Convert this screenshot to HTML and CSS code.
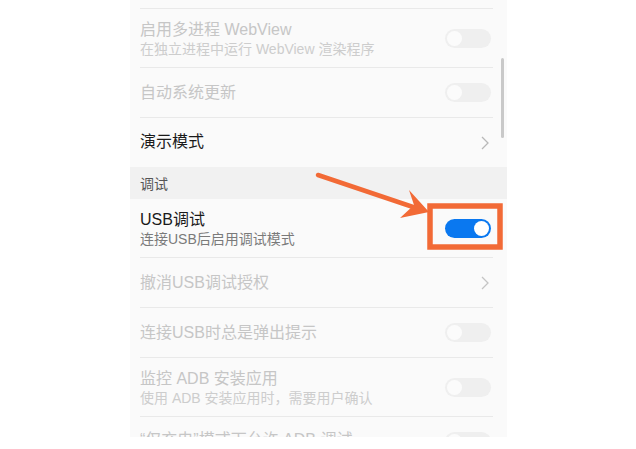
FILE: index.html
```html
<!DOCTYPE html>
<html lang="zh-CN">
<head>
<meta charset="utf-8">
<title>开发者选项</title>
<link rel="stylesheet" href="styles.css">
</head>
<body>
<div class="page">
  <div class="panel">
    <div class="list">
      <div class="row row-cut"></div>
      <div class="row row-tall disabled">
        <div class="texts">
          <div class="title">启用多进程 WebView</div>
          <div class="sub">在独立进程中运行 WebView 渲染程序</div>
        </div>
        <span class="toggle off"></span>
      </div>
      <div class="row disabled">
        <div class="texts"><div class="title">自动系统更新</div></div>
        <span class="toggle off"></span>
      </div>
      <div class="row row-last">
        <div class="texts"><div class="title">演示模式</div></div>
        <svg class="chevron" viewBox="0 0 8 14" width="8" height="14"><path d="M1 1 L7 7 L1 13" fill="none" stroke="#b8b8b8" stroke-width="1.3"/></svg>
      </div>
    </div>
    <div class="section">调试</div>
    <div class="list">
      <div class="row row-tall">
        <div class="texts">
          <div class="title">USB调试</div>
          <div class="sub">连接USB后启用调试模式</div>
        </div>
        <span class="toggle on"></span>
      </div>
      <div class="row disabled">
        <div class="texts"><div class="title">撤消USB调试授权</div></div>
        <svg class="chevron" viewBox="0 0 8 14" width="8" height="14"><path d="M1 1 L7 7 L1 13" fill="none" stroke="#c4c4c4" stroke-width="1.3"/></svg>
      </div>
      <div class="row disabled">
        <div class="texts"><div class="title">连接USB时总是弹出提示</div></div>
        <span class="toggle off"></span>
      </div>
      <div class="row row-tall disabled">
        <div class="texts">
          <div class="title">监控 ADB 安装应用</div>
          <div class="sub">使用 ADB 安装应用时，需要用户确认</div>
        </div>
        <span class="toggle off"></span>
      </div>
      <div class="row disabled row-partial">
        <div class="texts"><div class="title">“仅充电”模式下允许 ADB 调试</div></div>
        <span class="toggle off"></span>
      </div>
    </div>
    <div class="scrollbar"></div>
  </div>
  <svg class="annot" width="636" height="449" viewBox="0 0 636 449">
    <line x1="318" y1="175" x2="416" y2="208" stroke="#f26a36" stroke-width="4.5" stroke-linecap="round"/>
    <path d="M429 212 L409 190 L414 205 L400 218 Z" fill="#f26a36"/>
    <rect x="430" y="206" width="70" height="41" fill="none" stroke="#f26a36" stroke-width="5.5"/>
  </svg>
</div>
</body>
</html>
```
FILE: styles.css
```css
html, body {
  margin: 0;
  padding: 0;
  background: #ffffff;
}
.page {
  position: relative;
  width: 636px;
  height: 449px;
  overflow: hidden;
  font-family: "Liberation Sans", "Noto Sans CJK SC", sans-serif;
}
.panel {
  position: relative;
  margin-left: 130px;
  width: 377px;
  height: 437px;
  background: #fafafa;
  overflow: hidden;
}
.list {
  padding: 0 14px 0 10px;
}
.row {
  display: flex;
  align-items: center;
  justify-content: space-between;
  border-bottom: 1px solid #e9e9e9;
  padding-right: 2px;
  box-sizing: border-box;
  height: 50px;
}
.row-cut {
  height: 9px;
}
.row-tall {
  height: 59px;
}
.row-tall .texts {
  padding-top: 3px;
}
.row-last {
  border-bottom: none;
  height: 49px;
}
.texts {
  display: flex;
  flex-direction: column;
}
.title {
  font-size: 16px;
  line-height: 20px;
  color: #1a1a1a;
}
.row-last .title {
  margin-top: -1px;
}
.sub {
  font-size: 14px;
  line-height: 19px;
  color: #7a7a7a;
}
.disabled .title {
  color: #c6c6c6;
}
.disabled .sub {
  color: #cdcdcd;
}
.section {
  height: 32px;
  background: #f1f1f1;
  padding-left: 10px;
  font-size: 14px;
  line-height: 34px;
  color: #555555;
}
.toggle {
  position: relative;
  width: 46px;
  height: 19px;
  border-radius: 10px;
  background: #efefef;
  flex: none;
}
.toggle::after {
  content: "";
  position: absolute;
  top: 2px;
  left: 2px;
  width: 15px;
  height: 15px;
  border-radius: 50%;
  background: #fbfbfb;
}
.toggle.on {
  background: #0a78f0;
}
.toggle.on::after {
  left: auto;
  right: 2px;
  background: #ffffff;
}
.chevron {
  margin-right: 2px;
}
.row-partial .texts {
  margin-top: -4px;
}
.scrollbar {
  position: absolute;
  right: 3px;
  top: 58px;
  width: 3px;
  height: 80px;
  border-radius: 2px;
  background: #c9c9c9;
}
.annot {
  position: absolute;
  left: 0;
  top: 0;
  pointer-events: none;
}
```
